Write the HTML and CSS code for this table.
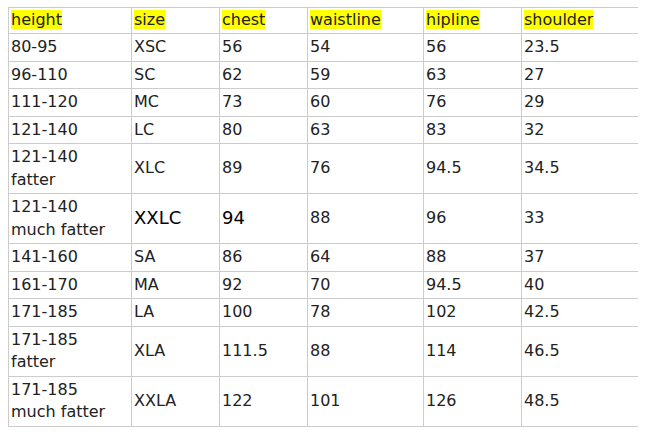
FILE: index.html
```html
<!DOCTYPE html>
<html>
<head>
<meta charset="utf-8">
<link rel="stylesheet" href="styles.css">
</head>
<body>
<table class="size-table">
  <colgroup>
    <col class="c1"><col class="c2"><col class="c3"><col class="c4"><col class="c5"><col class="c6">
  </colgroup>
  <tr class="head">
    <td><span class="hl">height</span></td>
    <td><span class="hl">size</span></td>
    <td><span class="hl">chest</span></td>
    <td><span class="hl">waistline</span></td>
    <td><span class="hl">hipline</span></td>
    <td><span class="hl">shoulder</span></td>
  </tr>
  <tr><td>80-95</td><td>XSC</td><td>56</td><td>54</td><td>56</td><td>23.5</td></tr>
  <tr><td>96-110</td><td>SC</td><td>62</td><td>59</td><td>63</td><td>27</td></tr>
  <tr><td>111-120</td><td>MC</td><td>73</td><td>60</td><td>76</td><td>29</td></tr>
  <tr><td>121-140</td><td>LC</td><td>80</td><td>63</td><td>83</td><td>32</td></tr>
  <tr><td>121-140<br>fatter</td><td>XLC</td><td>89</td><td>76</td><td>94.5</td><td>34.5</td></tr>
  <tr><td>121-140<br>much fatter</td><td class="big">XXLC</td><td class="big">94</td><td>88</td><td>96</td><td>33</td></tr>
  <tr><td>141-160</td><td>SA</td><td>86</td><td>64</td><td>88</td><td>37</td></tr>
  <tr><td>161-170</td><td>MA</td><td>92</td><td>70</td><td>94.5</td><td>40</td></tr>
  <tr><td>171-185</td><td>LA</td><td>100</td><td>78</td><td>102</td><td>42.5</td></tr>
  <tr><td>171-185<br>fatter</td><td>XLA</td><td>111.5</td><td>88</td><td>114</td><td>46.5</td></tr>
  <tr><td>171-185<br>much fatter</td><td>XXLA</td><td>122</td><td>101</td><td>126</td><td>48.5</td></tr>
</table>
</body>
</html>
```
FILE: styles.css
```css
html, body {
  background: #ffffff;
}
body {
  margin: 7px 8px;
  font-family: "DejaVu Sans", Verdana, sans-serif;
  font-size: 16px;
  color: #222222;
}
.size-table {
  border-collapse: collapse;
  table-layout: fixed;
  width: 633px;
}
.c1 { width: 123px; }
.c2 { width: 88px; }
.c3 { width: 88px; }
.c4 { width: 116px; }
.c5 { width: 98px; }
.c6 { width: 120px; }
.size-table td {
  border: 1px solid #cccccc;
  padding: 2px 2px 2px 2px;
  line-height: 22.5px;
  vertical-align: middle;
  white-space: nowrap;
}
.size-table .head td {
  padding-top: 1px;
  padding-bottom: 1.5px;
}
.hl {
  background: #ffff00;
}
.size-table td.big {
  font-size: 18px;
  color: #000000;
}
```
